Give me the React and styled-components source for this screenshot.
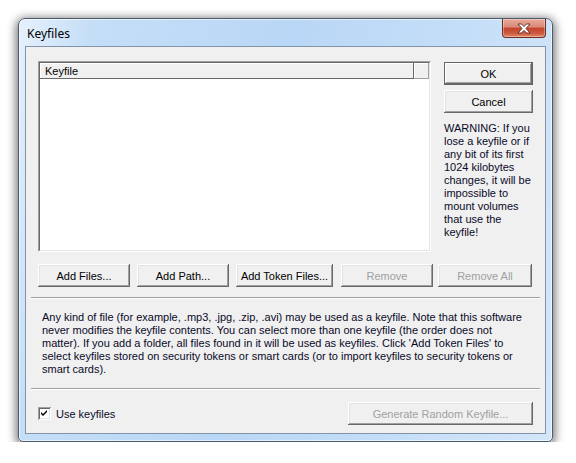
import React from 'react'
import styled, { createGlobalStyle, css } from 'styled-components'

const GlobalStyle = createGlobalStyle`
  html, body {
    margin: 0;
    background: #ffffff;
  }
  body {
    font-family: "Liberation Sans", Arial, sans-serif;
    font-size: 11px;
    color: #000;
  }
  * {
    box-sizing: border-box;
  }
`

const Page = styled.div`
  padding: 18px 0 0 18px;
`

const Window = styled.div`
  width: 535px;
  height: 424px;
  border: 1px solid #4b5b6e;
  border-radius: 7px 7px 5px 5px;
  background: linear-gradient(100deg, #e6f1fc 0%, #c5def7 12%, #b9d7f6 45%, #c3ddf7 70%, #d3e6fa 100%);
  box-shadow: 0 2px 10px 2px rgba(0, 0, 0, 0.55), inset 0 0 0 1px rgba(255, 255, 255, 0.6);
  padding: 0 6px 7px 6px;
  display: flex;
  flex-direction: column;
`

const TitleBar = styled.div`
  height: 27px;
  display: flex;
  align-items: flex-start;
  justify-content: space-between;
`

const Title = styled.div`
  font-family: "Noto Sans", "Open Sans", sans-serif;
  font-size: 12px;
  color: #000;
  padding: 6px 0 0 2px;
`

const CloseButton = styled.div`
  width: 44px;
  height: 19px;
  border: 1px solid #6e2b22;
  border-top: none;
  border-radius: 0 0 4px 4px;
  background: linear-gradient(#e9a99a 0%, #d88a78 45%, #c4442c 50%, #cc5a3f 80%, #e08c6a 100%);
  box-shadow: inset 0 0 0 1px rgba(255, 255, 255, 0.35);
  display: flex;
  align-items: center;
  justify-content: center;
`

const Client = styled.div`
  flex: 1;
  border: 1px solid #8394a8;
  background: #f0f0f0;
  display: flex;
  flex-direction: column;
  padding: 14px 12px 0 12px;
`

const TopArea = styled.div`
  display: flex;
  gap: 13px;
`

const ListView = styled.div`
  width: 395px;
  height: 191px;
  border-style: solid;
  border-width: 1px;
  border-color: #a0a0a0 #ffffff #ffffff #a0a0a0;
  display: flex;
  flex-direction: column;
`

const ListInner = styled.div`
  flex: 1;
  border-style: solid;
  border-width: 1px;
  border-color: #696969 #e3e3e3 #e3e3e3 #696969;
  background: #fff;
  display: flex;
  flex-direction: column;
`

const HeaderRow = styled.div`
  height: 16px;
  display: flex;
  background: #f0f0f0;
`

const HeaderCell = styled.div`
  width: ${(p) => p.$w}px;
  box-shadow: inset -1px -1px #696969, inset 1px 1px #fff;
  padding: 2px 0 0 5px;
  line-height: 12px;
`

const HeaderFill = styled.div`
  flex: 1;
  box-shadow: inset -1px -1px #a0a0a0, inset 1px 1px #fff;
`

const SideColumn = styled.div`
  width: 89px;
  display: flex;
  flex-direction: column;
  gap: 5px;
  padding-top: 1px;
`

const Button = styled.div`
  width: ${(p) => p.$w || 89}px;
  height: 23px;
  background: #f0f0f0;
  display: flex;
  align-items: center;
  justify-content: center;
  color: ${(p) => (p.$disabled ? '#a0a0a0' : '#000')};
  box-shadow: inset -1px -1px #696969, inset 1px 1px #fff, inset -2px -2px #a0a0a0, inset 2px 2px #e3e3e3;
  ${(p) =>
    p.$default &&
    css`
      box-shadow: inset 0 0 0 1px #646464, inset -2px -2px #696969, inset 2px 2px #fff, inset -3px -3px #a0a0a0;
    `}
`

const Warning = styled.div`
  margin-top: 4px;
  line-height: 13px;
  color: #0a0a28;
`

const ButtonRow = styled.div`
  display: flex;
  margin-top: 12px;
`

const RowButton = styled(Button)`
  margin-left: ${(p) => p.$ml || 0}px;
`

const Separator = styled.div`
  height: 2px;
  margin: ${(p) => p.$mt}px -7px 0 -7px;
  border-top: 1px solid #a0a0a0;
  border-bottom: 1px solid #fff;
`

const Notes = styled.div`
  margin: 12px 0 0 4px;
  line-height: 13px;
  color: #0a0a28;
`

const BottomRow = styled.div`
  display: flex;
  align-items: center;
  justify-content: space-between;
  margin-top: 12px;
`

const CheckLabel = styled.div`
  display: flex;
  align-items: center;
  gap: 5px;
  color: #0a0a28;
`

const CheckBox = styled.div`
  width: 13px;
  height: 13px;
  background: #fff;
  box-shadow: inset 1px 1px #a0a0a0, inset -1px -1px #fff, inset 2px 2px #696969, inset -2px -2px #e3e3e3;
  display: flex;
  align-items: center;
  justify-content: center;
`

const CloseGlyph = () => (
  <svg width="14" height="11" viewBox="0 0 14 11">
    <path
      d="M1 1 L4.5 1 L7 3.6 L9.5 1 L13 1 L9 5.5 L13 10 L9.5 10 L7 7.4 L4.5 10 L1 10 L5 5.5 Z"
      fill="#fff"
      stroke="#5b2a23"
      strokeWidth="0.9"
      strokeLinejoin="round"
    />
  </svg>
)

const CheckMark = () => (
  <svg width="7" height="7" viewBox="0 0 7 7">
    <path d="M0 2 L2 4 L6 0 L6 2 L2 6 L0 4 Z" fill="#000" />
  </svg>
)

const App = () => (
  <Page>
    <GlobalStyle />
    <Window>
      <TitleBar>
        <Title>Keyfiles</Title>
        <CloseButton>
          <CloseGlyph />
        </CloseButton>
      </TitleBar>
      <Client>
        <TopArea>
          <ListView>
            <ListInner>
              <HeaderRow>
                <HeaderCell $w={374}>Keyfile</HeaderCell>
                <HeaderFill />
              </HeaderRow>
            </ListInner>
          </ListView>
          <SideColumn>
            <Button $default>OK</Button>
            <Button>Cancel</Button>
            <Warning>
              WARNING: If you
              <br />
              lose a keyfile or if
              <br />
              any bit of its first
              <br />
              1024 kilobytes
              <br />
              changes, it will be
              <br />
              impossible to
              <br />
              mount volumes
              <br />
              that use the
              <br />
              keyfile!
            </Warning>
          </SideColumn>
        </TopArea>
        <ButtonRow>
          <RowButton $w={92}>Add Files...</RowButton>
          <RowButton $w={92} $ml={7}>Add Path...</RowButton>
          <RowButton $w={97} $ml={7}>Add Token Files...</RowButton>
          <RowButton $w={92} $ml={8} $disabled>Remove</RowButton>
          <RowButton $w={94} $ml={5} $disabled>Remove All</RowButton>
        </ButtonRow>
        <Separator $mt={10} />
        <Notes>
          Any kind of file (for example, .mp3, .jpg, .zip, .avi) may be used as a keyfile. Note that this software
          <br />
          never modifies the keyfile contents. You can select more than one keyfile (the order does not
          <br />
          matter). If you add a folder, all files found in it will be used as keyfiles. Click 'Add Token Files' to
          <br />
          select keyfiles stored on security tokens or smart cards (or to import keyfiles to security tokens or
          <br />
          smart cards).
        </Notes>
        <Separator $mt={12} />
        <BottomRow>
          <CheckLabel>
            <CheckBox>
              <CheckMark />
            </CheckBox>
            Use keyfiles
          </CheckLabel>
          <Button $w={185} $disabled>Generate Random Keyfile...</Button>
        </BottomRow>
      </Client>
    </Window>
  </Page>
)

export default App
